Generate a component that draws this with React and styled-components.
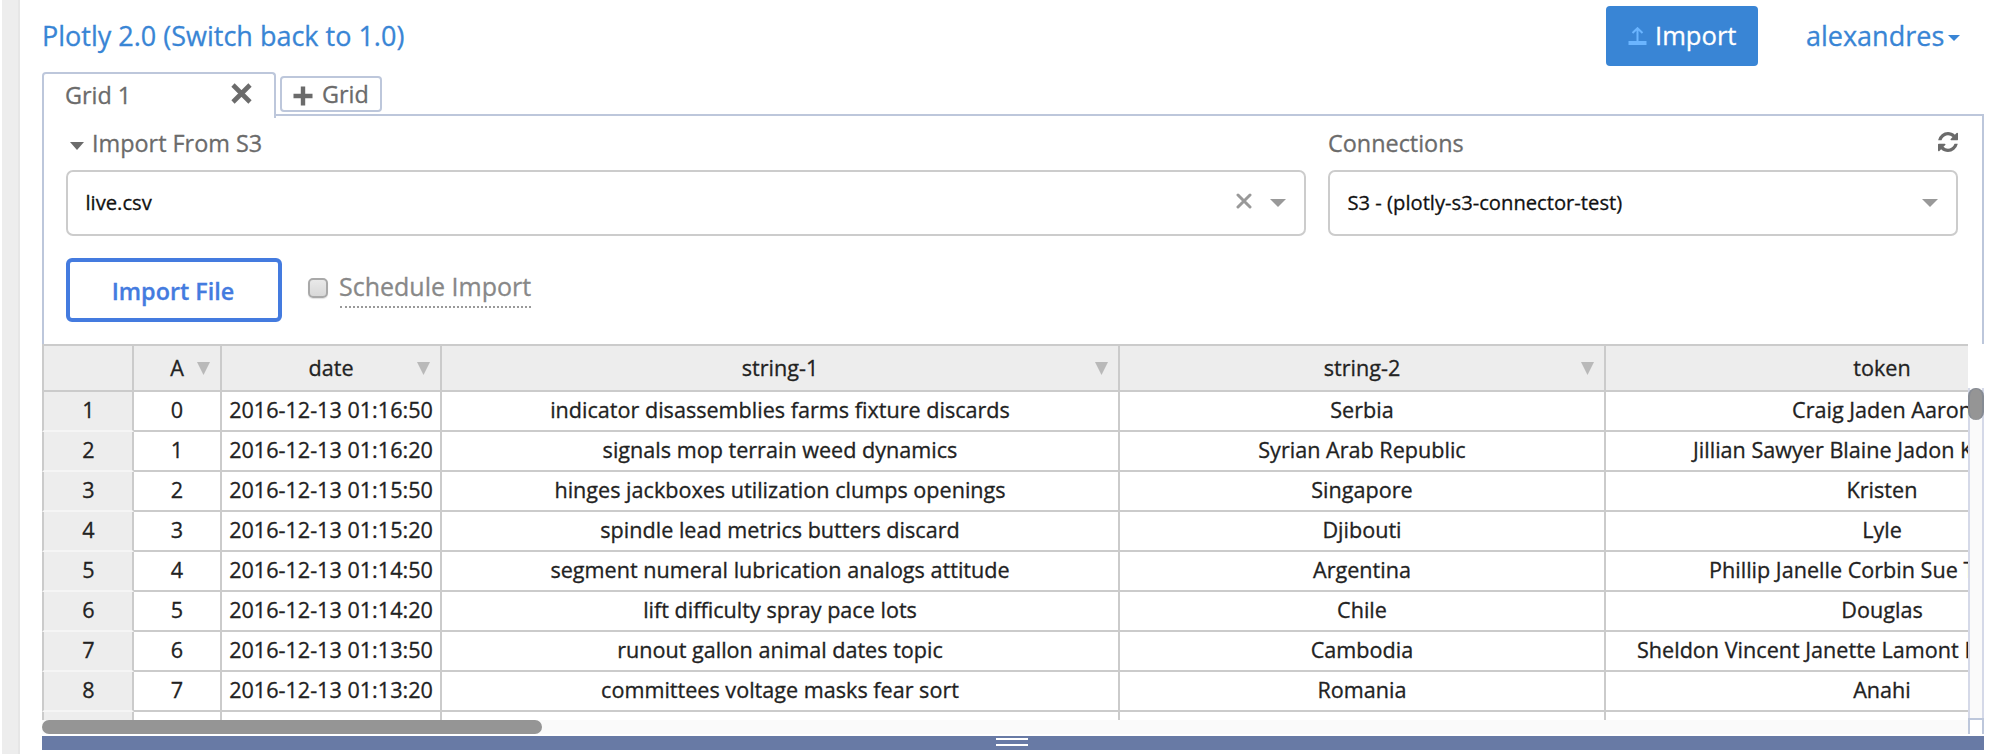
import React from "react";
import styled, { createGlobalStyle } from "styled-components";

const GlobalStyle = createGlobalStyle`
  * { box-sizing: border-box; }
  body {
    margin: 0;
    background: #fff;
    overflow: hidden;
    font-family: "Open Sans", "Liberation Sans", sans-serif;
    -webkit-text-stroke-width: 0.3px;
  }
  button { font-family: inherit; cursor: pointer; }
`;

const LINE = "#bdc7db";
const GREY_TEXT = "#6b6b6b";
const GRID_LINE = "#cbcbcb";
const BLUE = "#3985d5";

const Page = styled.div`
  display: flex;
  width: 2012px;
  height: 754px;
  overflow: hidden;
`;

const Gutter = styled.aside`
  flex: none;
  width: 18px;
  margin: 0 22px 0 2px;
  background: #ededed;
  border-right: 2px solid #e6e6e6;
`;

const Main = styled.main`
  flex: none;
  width: 1942px;
`;

const Header = styled.header`
  display: flex;
  align-items: flex-start;
  height: 72px;
`;

const HeaderLink = styled.a`
  display: flex;
  align-items: center;
  margin-top: 18px;
  font-size: 27px;
  line-height: 36px;
  color: ${BLUE};
  white-space: nowrap;
`;

const ImportButton = styled.button`
  display: flex;
  align-items: center;
  width: 152px;
  height: 60px;
  margin: 6px 48px 0 auto;
  padding: 0 0 0 22px;
  gap: 8px;
  border: 0;
  border-radius: 4px;
  background: ${BLUE};
  color: #fff;
  font-size: 25.6px;
  font-weight: 500;
  line-height: 36px;
`;

const UserLink = styled(HeaderLink)`
  width: 178px;
  gap: 4px;

  svg { margin-top: 4px; }
`;

const Tabs = styled.nav`
  display: flex;
  align-items: flex-start;
  height: 42px;
`;

const Tab = styled.div`
  position: relative;
  z-index: 1;
  display: flex;
  justify-content: space-between;
  flex: none;
  width: 234px;
  height: 46px;
  padding: 6px 22px 0 21px;
  border: 2px solid ${LINE};
  border-bottom: 0;
  border-radius: 4px 4px 0 0;
  background: #fff;
  color: ${GREY_TEXT};
  font-size: 23.4px;
  line-height: 30px;

  svg { margin-top: 3px; }
`;

const AddTab = styled.button`
  display: flex;
  align-items: center;
  width: 102px;
  height: 36px;
  margin: 4px 0 0 4px;
  padding: 0 0 0 11px;
  gap: 9px;
  border: 2px solid ${LINE};
  border-radius: 4px;
  background: #fff;
  color: ${GREY_TEXT};
  font-size: 23.4px;
  line-height: 30px;

  svg { margin-top: 4px; }
`;

const Panel = styled.section`
  height: 230px;
  padding: 12px 24px 0 22px;
  border: 2px solid ${LINE};
  border-bottom: 0;
`;

const Fields = styled.div`
  display: flex;
  gap: 22px;
`;

const Field = styled.div`
  width: ${(p) => p.$width}px;
`;

const FieldLabel = styled.div`
  display: flex;
  align-items: center;
  height: 42px;
  padding: 0 0 12px ${(p) => p.$indent || 0}px;
  gap: 8px;
  color: ${GREY_TEXT};
  font-size: 23.4px;
  line-height: 30px;
  white-space: nowrap;
`;

const Disclosure = styled.span`
  display: flex;
  padding-top: 5px;
`;

const RefreshIcon = styled.svg`
  margin: 0 0 2px auto;
`;

const Select = styled.div`
  display: flex;
  align-items: center;
  height: 66px;
  padding: 0 18px 0 17.500px;
  gap: 18px;
  border: 2px solid #ccc;
  border-radius: 7px;
  background: #fff;
  color: #111;
  font-size: 20.2px;
  line-height: 30px;
`;

const SelectValue = styled.span`
  flex: 1;
  padding-bottom: 3px;
`;

const ClearIcon = styled.svg`
  margin-bottom: 4px;
`;

const Actions = styled.div`
  display: flex;
  align-items: flex-start;
  margin-top: 22px;
`;

const ImportFileButton = styled.button`
  width: 216px;
  height: 64px;
  padding: 2px 2px 0 0;
  border: 4px solid #447bdf;
  border-radius: 6px;
  background: #fff;
  color: #447bdf;
  font-size: 23.4px;
  font-weight: 600;
  line-height: 30px;
`;

const Checkbox = styled.span`
  width: 20px;
  height: 20px;
  margin: 20px 12px 0 26px;
  border: 2px solid #a9a9a9;
  border-radius: 5px;
  background: linear-gradient(#e9e9e9, #d8d8d8);
  box-shadow: 0 1px 1px rgba(0, 0, 0, 0.12);
`;

const ScheduleLabel = styled.span`
  height: 40px;
  margin-top: 10px;
  border-bottom: 2px dotted #999;
  color: #888;
  font-size: 25px;
  line-height: 36px;
  white-space: nowrap;
  text-indent: -1px;
`;

const TableArea = styled.div`
  display: flex;
  height: 390px;
`;

const TableView = styled.div`
  width: 1926px;
  overflow: hidden;
`;

const TableBody = styled.div`
  height: 376px;
  overflow: hidden;
  border-top: 2px solid ${GRID_LINE};
`;

const Row = styled.div`
  display: grid;
  grid-template-columns: 92px 88px 220px 678px 486px 554px;
  width: 2118px;
  height: ${(p) => (p.$head ? 46 : 40)}px;
`;

const Cell = styled.div`
  position: relative;
  padding-top: ${(p) => (p.$head ? 7 : 3)}px;
  padding-left: ${(p) => p.$indent || 0}px;
  border-right: 2px solid ${GRID_LINE};
  border-bottom: 2px solid ${GRID_LINE};
  background: ${(p) => (p.$head ? "#ededed" : "#fff")};
  color: #222;
  font-size: 21.6px;
  line-height: 30px;
  text-align: ${(p) => (p.$indent ? "left" : "center")};
  white-space: nowrap;

  svg { position: absolute; top: 16px; right: 10px; }
`;

const IndexCell = styled(Cell)`
  padding-left: 1px;
  border-left: 2px solid ${GRID_LINE};
  border-bottom-color: ${(p) => (p.$head ? GRID_LINE : "#f5f5f5")};
  background: #ededed;
`;

const HTrack = styled.div`
  height: 14px;
  background: #fafafa;
`;

const HThumb = styled.div`
  width: 500px;
  height: 14px;
  border-radius: 7px;
  background: #959595;
`;

const VScroll = styled.div`
  width: 16px;
  margin-top: 44px;
`;

const VTrack = styled.div`
  height: 332px;
  border-bottom: 2px solid ${LINE};
  background: linear-gradient(to right, #d5d9e8 2px, #fafafa 2px, #fafafa 14px, #d5d9e8 14px);
`;

const VThumb = styled.div`
  width: 16px;
  height: 32px;
  border: 2px solid #858a93;
  border-top-width: 1px;
  border-bottom: 0;
  border-radius: 8px;
  background: #959595;
`;

const ScrollCorner = styled.div`
  height: 14px;
  border: solid ${LINE};
  border-width: 0 2px;
`;

const SplitBar = styled.div`
  display: flex;
  justify-content: center;
  height: 14px;
  margin-top: 2px;
  padding: 2px 2px 0 0;
  background: #687aa5;
`;

const Grip = styled.span`
  width: 32px;
  height: 8px;
  border: solid #fff;
  border-width: 2px 0;
`;

const Triangle = ({ w, h, color }) => (
  <svg width={w} height={h} viewBox="0 0 10 10" preserveAspectRatio="none" aria-hidden="true">
    <path d="M0 0H10L5 10Z" fill={color} />
  </svg>
);

const columns = ["A", "date", "string-1", "string-2", "token"];

// tokenIndent is set where the token is too long for the visible part of its column
const rows = [
  { values: ["2016-12-13 01:16:50", "indicator disassemblies farms fixture discards", "Serbia", "Craig Jaden Aaron"] },
  { values: ["2016-12-13 01:16:20", "signals mop terrain weed dynamics", "Syrian Arab Republic", "Jillian Sawyer Blaine Jadon K"], tokenIndent: 87 },
  { values: ["2016-12-13 01:15:50", "hinges jackboxes utilization clumps openings", "Singapore", "Kristen"] },
  { values: ["2016-12-13 01:15:20", "spindle lead metrics butters discard", "Djibouti", "Lyle"] },
  { values: ["2016-12-13 01:14:50", "segment numeral lubrication analogs attitude", "Argentina", "Phillip Janelle Corbin Sue T"], tokenIndent: 103 },
  { values: ["2016-12-13 01:14:20", "lift difficulty spray pace lots", "Chile", "Douglas"] },
  { values: ["2016-12-13 01:13:50", "runout gallon animal dates topic", "Cambodia", "Sheldon Vincent Janette Lamont L"], tokenIndent: 31 },
  { values: ["2016-12-13 01:13:20", "committees voltage masks fear sort", "Romania", "Anahi"] },
];

export default function App() {
  return (
    <Page>
      <GlobalStyle />
      <Gutter />
      <Main>
        <Header>
          <HeaderLink>Plotly 2.0 (Switch back to 1.0)</HeaderLink>
          <ImportButton>
            <svg width="19" height="18" viewBox="0 0 19 18" fill="none" stroke="#6bb5ff" aria-hidden="true">
              <path d="M9.5 14V1.5M4.5 6L9.5 1.2L14.5 6" strokeWidth="2" />
              <path d="M0.5 16H18.5" strokeWidth="4" />
            </svg>
            Import
          </ImportButton>
          <UserLink>
            alexandres
            <Triangle w={12} h={6} color={BLUE} />
          </UserLink>
        </Header>
        <Tabs>
          <Tab>
            Grid 1
            <svg width="21" height="21" viewBox="0 0 21 21" aria-hidden="true">
              <path d="M2 2L19 19M19 2L2 19" stroke={GREY_TEXT} strokeWidth="4.6" />
            </svg>
          </Tab>
          <AddTab>
            <svg width="20" height="20" viewBox="0 0 20 20" aria-hidden="true">
              <path d="M10 0.5V19.5M0.5 10H19.5" stroke={GREY_TEXT} strokeWidth="4.4" />
            </svg>
            Grid
          </AddTab>
        </Tabs>
        <Panel>
          <Fields>
            <Field $width={1240}>
              <FieldLabel $indent={4}>
                <Disclosure>
                  <Triangle w={14} h={8} color={GREY_TEXT} />
                </Disclosure>
                Import From S3
              </FieldLabel>
              <Select>
                <SelectValue>live.csv</SelectValue>
                <ClearIcon width="16" height="16" viewBox="0 0 16 16" aria-hidden="true">
                  <path d="M2 2L14 14M14 2L2 14" stroke="#999" strokeWidth="3" strokeLinecap="round" />
                </ClearIcon>
                <Triangle w={16} h={8} color="#999" />
              </Select>
            </Field>
            <Field $width={630}>
              <FieldLabel>
                Connections
                <RefreshIcon width="20" height="20" viewBox="0 0 1536 1536" aria-hidden="true">
                  <path
                    fill={GREY_TEXT}
                    d="M1511 928q0 5-1 7-64 268-268 434.500t-478 166.500q-146 0-282.500-55t-243.500-157l-129 129q-19 19-45 19t-45-19-19-45v-448q0-26 19-45t45-19h448q26 0 45 19t19 45-19 45l-137 137q71 66 161 102t187 36q134 0 250-65t186-179q11-17 53-117 8-23 30-23h192q13 0 22.500 9.500t9.500 22.500zM1536 128v448q0 26-19 45t-45 19h-448q-26 0-45-19t-19-45 19-45l138-138q-148-137-349-137-134 0-250 65t-186 179q-11 17-53 117-8 23-30 23h-199q-13 0-22.500-9.500t-9.500-22.500v-7q65-268 270-434.500t480-166.500q146 0 284 55.500t245 156.500l130-129q19-19 45-19t45 19 19 45z"
                  />
                </RefreshIcon>
              </FieldLabel>
              <Select>
                <SelectValue>S3 - (plotly-s3-connector-test)</SelectValue>
                <Triangle w={16} h={8} color="#999" />
              </Select>
            </Field>
          </Fields>
          <Actions>
            <ImportFileButton>Import File</ImportFileButton>
            <Checkbox role="checkbox" aria-checked="false" />
            <ScheduleLabel>Schedule Import</ScheduleLabel>
          </Actions>
        </Panel>
        <TableArea>
          <TableView>
            <TableBody>
              <Row $head>
                <IndexCell $head />
                {columns.map((name) => (
                  <Cell key={name} $head>
                    {name}
                    <Triangle w={13} h={13} color="#b9b9b9" />
                  </Cell>
                ))}
              </Row>
              {rows.map(({ values, tokenIndent }, i) => (
                <Row key={i}>
                  <IndexCell>{i + 1}</IndexCell>
                  <Cell>{i}</Cell>
                  {values.map((value, j) => (
                    <Cell key={j} $indent={j === 3 ? tokenIndent : 0}>{value}</Cell>
                  ))}
                </Row>
              ))}
              <Row>
                <IndexCell />
                {columns.map((name) => (
                  <Cell key={name} />
                ))}
              </Row>
            </TableBody>
            <HTrack>
              <HThumb />
            </HTrack>
          </TableView>
          <VScroll>
            <VTrack>
              <VThumb />
            </VTrack>
            <ScrollCorner />
          </VScroll>
        </TableArea>
        <SplitBar>
          <Grip />
        </SplitBar>
      </Main>
    </Page>
  );
}
